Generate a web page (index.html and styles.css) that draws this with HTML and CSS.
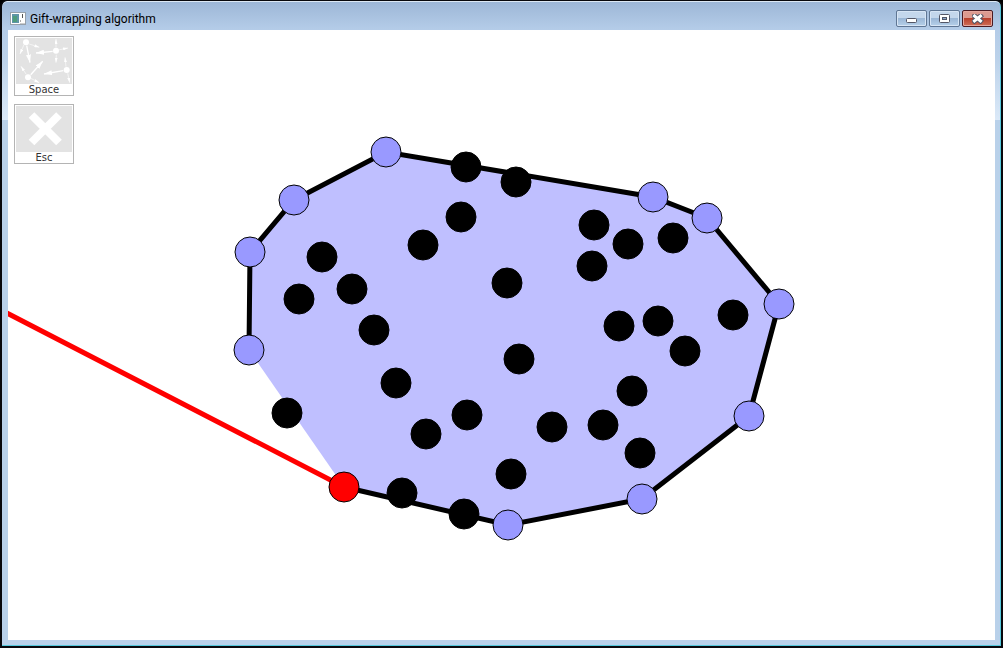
FILE: index.html
```html
<!DOCTYPE html>
<html lang="en">
<head>
<meta charset="utf-8">
<title>Gift-wrapping algorithm</title>
<link rel="stylesheet" href="styles.css">
</head>
<body>
<div class="window">
  <header class="titlebar">
    <svg class="app-icon" width="16" height="13" viewBox="0 0 16 13" aria-hidden="true">
      <rect x="0.500" y="0.500" width="15" height="12" fill="#fff" stroke="#96a0aa"/>
      <rect x="2" y="2" width="7" height="9" fill="#5f95a8"/>
      <rect x="3" y="4" width="4" height="6" fill="#4e9c7c"/>
      <path d="M10 9h1M12.500 2v4" stroke="#555" fill="none"/>
      <path d="M10 11.500h5" stroke="#ccc"/>
    </svg>
    <h1 class="title">Gift-wrapping algorithm</h1>
    <div class="controls">
      <button class="control" type="button" aria-label="Minimize">
        <svg width="12" height="10" viewBox="0 0 12 10"><rect x="0.500" y="4.500" width="10" height="4" rx="1" fill="#fff" stroke="#535666"/></svg>
      </button>
      <button class="control" type="button" aria-label="Maximize">
        <svg width="12" height="10" viewBox="0 0 12 10"><rect x="0.500" y="0.500" width="10" height="8" rx="1" fill="#fff" stroke="#535666"/><rect x="3.500" y="3.500" width="4" height="2" fill="#8ba9cb" stroke="#535666"/></svg>
      </button>
      <button class="control control-close" type="button" aria-label="Close">
        <svg width="12" height="10" viewBox="0 0 12 10"><path d="M2.500 2l6 5M8.500 2l-6 5" stroke="#535666" stroke-width="5" stroke-linecap="square"/><path d="M2.500 2l6 5M8.500 2l-6 5" stroke="#fff" stroke-width="3" stroke-linecap="square"/></svg>
      </button>
    </div>
  </header>
  <main class="stage">
    <svg class="plot" viewBox="8 30 987 610" preserveAspectRatio="xMinYMin meet" role="img" aria-label="Convex hull under construction">
      <path class="hull-area" d="M249 350L250 252L294 200L386 152L653 197L707 218L779 304L749 416L642 499L508 525L344 487Z"/>
      <path class="hull-edge" d="M249 350L250 252L294 200L386 152L653 197L707 218L779 304L749 416L642 499L508 525L344 487"/>
      <path class="sweep" d="M344 487L0 309.500"/>
      <g class="point">
        <circle cx="466" cy="167" r="15"/><circle cx="516" cy="182" r="15"/><circle cx="461" cy="217" r="15"/>
        <circle cx="423" cy="245" r="15"/><circle cx="322" cy="257" r="15"/><circle cx="352" cy="289" r="15"/>
        <circle cx="299" cy="299" r="15"/><circle cx="374" cy="330" r="15"/><circle cx="507" cy="283" r="15"/>
        <circle cx="594" cy="225" r="15"/><circle cx="628" cy="244" r="15"/><circle cx="673" cy="238" r="15"/>
        <circle cx="592" cy="266" r="15"/><circle cx="619" cy="326" r="15"/><circle cx="658" cy="321" r="15"/>
        <circle cx="733" cy="315" r="15"/><circle cx="685" cy="351" r="15"/><circle cx="519" cy="359" r="15"/>
        <circle cx="396" cy="383" r="15"/><circle cx="632" cy="391" r="15"/><circle cx="287" cy="413" r="15"/>
        <circle cx="467" cy="415" r="15"/><circle cx="426" cy="434" r="15"/><circle cx="552" cy="427" r="15"/>
        <circle cx="603" cy="425" r="15"/><circle cx="640" cy="453" r="15"/><circle cx="511" cy="474" r="15"/>
        <circle cx="402" cy="493" r="15"/><circle cx="464" cy="514" r="15"/>
      </g>
      <g class="point point-hull">
        <circle cx="249" cy="350" r="15"/><circle cx="250" cy="252" r="15"/><circle cx="294" cy="200" r="15"/>
        <circle cx="386" cy="152" r="15"/><circle cx="653" cy="197" r="15"/><circle cx="707" cy="218" r="15"/>
        <circle cx="779" cy="304" r="15"/><circle cx="749" cy="416" r="15"/><circle cx="642" cy="499" r="15"/>
        <circle cx="508" cy="525" r="15"/>
      </g>
      <g class="point point-current"><circle cx="344" cy="487" r="15"/></g>
    </svg>
    <div class="tools">
      <button class="tool" type="button">
        <svg class="tool-icon" viewBox="0 0 56 46" aria-hidden="true">
          <defs>
            <marker id="head-large" viewBox="0 0 8 5" refX="8" refY="2.500" markerWidth="8" markerHeight="5" markerUnits="userSpaceOnUse" orient="auto"><path d="M0 0L8 2.500L0 5Z" fill="#fff"/></marker>
            <marker id="head-small" viewBox="0 0 5 3" refX="5" refY="1.500" markerWidth="5" markerHeight="3" markerUnits="userSpaceOnUse" orient="auto"><path d="M0 0L5 1.500L0 3Z" fill="#fff"/></marker>
          </defs>
          <g fill="#fff">
            <circle cx="10" cy="4.300" r="3"/><circle cx="40" cy="12.700" r="3"/><circle cx="50.700" cy="32" r="3"/><circle cx="12" cy="39.300" r="3"/>
          </g>
          <g stroke="#fff" stroke-width="1.300" marker-end="url(#head-large)">
            <path marker-end="url(#head-large)" d="M10.700 7.700L14 24.700"/>
            <path marker-end="url(#head-large)" d="M36.700 13.300L20 15"/>
            <path marker-end="url(#head-large)" d="M14.700 36.700L26.700 23.300"/>
            <path marker-end="url(#head-large)" d="M47.300 32.700L28 36"/>
          </g>
          <g stroke="#fff" stroke-width="0.600">
            <path marker-end="url(#head-small)" d="M13.300 6L23.300 9.300"/>
            <path marker-end="url(#head-small)" d="M8 6.700L4 16"/>
            <path marker-end="url(#head-small)" d="M42.300 12L52 10"/>
            <path marker-end="url(#head-small)" d="M40 9.300L40 1"/>
            <path marker-end="url(#head-small)" d="M40.300 16.700L40 24.700"/>
            <path marker-end="url(#head-small)" d="M50 28.700L49 19.300"/>
            <path marker-end="url(#head-small)" d="M51.700 35.300L53.700 44.700"/>
            <path marker-end="url(#head-small)" d="M10 36L5 28.300"/>
            <path marker-end="url(#head-small)" d="M14.700 40.300L23.300 44.700"/>
          </g>
        </svg>
        <span class="tool-key">Space</span>
      </button>
      <button class="tool" type="button">
        <svg class="tool-icon" viewBox="0 0 56 46" aria-hidden="true">
          <path d="M15.500 9l27.500 27.500M43 9L15.500 36.500" stroke="#fff" stroke-width="8"/>
        </svg>
        <span class="tool-key">Esc</span>
      </button>
    </div>
  </main>
</div>
</body>
</html>
```
FILE: styles.css
```css
* { box-sizing: border-box; }

body {
  margin: 0;
  background: #000;
  font-family: Roboto, "Open Sans", sans-serif;
}

.window {
  display: flex;
  flex-direction: column;
  min-height: 100vh;
  padding: 2px 6px 6px;
  border: 2px solid #08080c;
  border-top-width: 1px;
  border-radius: 7px 7px 0 0;
  background:
    linear-gradient(#9cb6d6 0, #b4cce8 28px, #bcd2ea 60px, #dbe9f8 119px, #b9d1ea 119px);
  box-shadow: inset -1px -1px 0 #54c8dc, inset 0 1px 0 #dce8f4;
}

.titlebar {
  display: flex;
  align-items: center;
  height: 27px;
  padding: 4px 2px 0 2px;
}

.title {
  flex: 1;
  margin: 0 0 0 4px;
  color: #000;
  font-size: 12px;
  font-weight: 400;
  line-height: 16px;
}

.controls {
  display: flex;
  gap: 2px;
}

.control {
  display: grid;
  place-items: center;
  width: 31px;
  height: 17px;
  padding: 0;
  border: 1px solid #5f7694;
  border-radius: 2px;
  background: linear-gradient(#c4d7ec 0 50%, #9bb7d6 50%, #b6d0ea);
  box-shadow: inset 0 0 0 1px #d7e5f5;
}

.control-close {
  border-color: #4a1a22;
  background: linear-gradient(#dc9a90 0 50%, #b8402c 50%, #cf6f58);
  box-shadow: inset 0 0 0 1px #e4a79e;
}

.stage {
  position: relative;
  flex: 1;
  background: #fff;
}

.plot {
  display: block;
  width: 100%;
}

.hull-area { fill: #bfbfff; }

.hull-edge {
  fill: none;
  stroke: #000;
  stroke-width: 5;
}

.sweep {
  stroke: #f00;
  stroke-width: 5;
}

.point {
  fill: #000;
  stroke: #000;
}

.point-hull { fill: #9999ff; }

.point-current { fill: #f00; }

.tools {
  position: absolute;
  top: 6px;
  left: 6px;
  display: grid;
  gap: 8px;
}

.tool {
  display: flex;
  flex-direction: column;
  width: 60px;
  height: 60px;
  padding: 1px;
  border: 1px solid #b4b4b4;
  background: #fff;
}

.tool-icon {
  display: block;
  flex: none;
  width: 100%;
  height: 46px;
  background: #e3e3e3;
}

.tool-key {
  width: 100%;
  color: #333;
  font-family: "DejaVu Sans", sans-serif;
  font-size: 10px;
  line-height: 12px;
  text-align: center;
}
```
